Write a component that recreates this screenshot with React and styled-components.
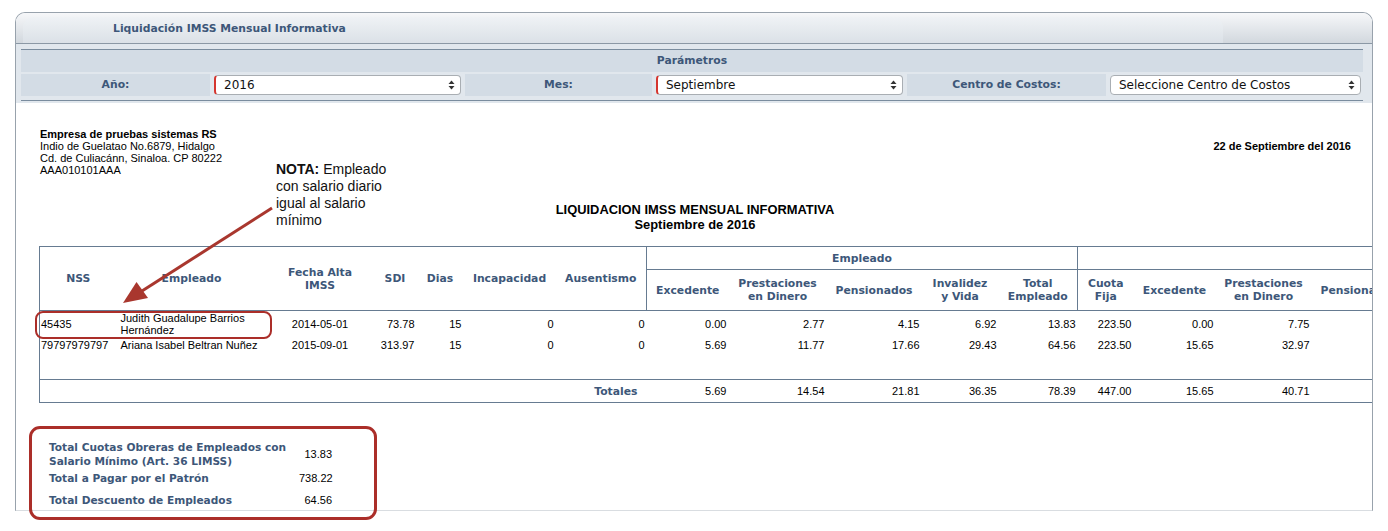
import React from "react";
import styled, { createGlobalStyle } from "styled-components";

const BLUE = "#3d5779";
const LINE = "#667b91";
const RED = "#ab2e29";
const HEAD_FONT = `"DejaVu Sans", Verdana, sans-serif`;
const BODY_FONT = `"Liberation Sans", Arial, Helvetica, sans-serif`;

const GlobalStyle = createGlobalStyle`
  html, body { margin: 0; padding: 0; background: #fff; }
  body { font-family: ${BODY_FONT}; color: #000; }
  *, *::before, *::after { box-sizing: border-box; }
`;

const Page = styled.div`
  position: relative;
  width: 1388px;
  height: 531px;
  padding: 12px 0 0 15px;
  overflow: hidden;
`;

const Panel = styled.section`
  width: 1358px;
  height: 499px;
  border: 1px solid #98a2ac;
  border-bottom-color: #d9dde1;
  border-radius: 10px 10px 0 0;
  overflow: hidden;
  display: flex;
  flex-direction: column;
  background: #fff;
`;

const PanelHeader = styled.header`
  height: 31px;
  flex: none;
  padding: 4px 0 0 7px;
  background: linear-gradient(#f6f7f9, #d2d8de);
  border-bottom: 1px solid #8b98a5;
  display: flex;
  align-items: flex-end;
`;

const Tab = styled.div`
  width: 1200px;
  height: 26px;
  border-radius: 10px 10px 0 0;
  background: linear-gradient(#eff2f5, #dbe1e7);
  padding-left: 90px;
  font: bold 10.8px/24px ${HEAD_FONT};
  color: ${BLUE};
`;

const ParamsArea = styled.div`
  flex: none;
  background: #e1e7ed;
  padding: 5px 9px 2px 5px;
`;

const ParamsBlock = styled.div`
  border-top: 1px solid #7a8c9e;
  border-bottom: 1px solid #7a8c9e;
  padding-bottom: 4px;
  display: flex;
  flex-direction: column;
  gap: 2px;
`;

const ParamsTitle = styled.div`
  height: 22px;
  background: #d3dce5;
  text-align: center;
  font: bold 10.8px/22px ${HEAD_FONT};
  color: ${BLUE};
`;

const FieldsRow = styled.div`
  display: grid;
  grid-template-columns: 189px 251px 187px 251px 199px 1fr;
  column-gap: 2px;
  height: 22px;
`;

const FieldLabel = styled.div`
  background: #d3dce5;
  text-align: center;
  font: bold 10.8px/22px ${HEAD_FONT};
  color: ${BLUE};
`;

const SelectBox = styled.div`
  margin: 1px 2px 0;
  height: 20px;
  background: #fff;
  border: 1px solid #a9aeb3;
  border-left: ${(p) => (p.$required ? `2px solid #d5362f` : `1px solid #a9aeb3`)};
  border-radius: 4px;
  display: flex;
  align-items: center;
  justify-content: space-between;
  padding: 0 5px 0 8px;
  font: 12px ${HEAD_FONT};
  color: #111;
`;

const Content = styled.div`
  flex: 1;
  padding: 25px 21px 0 23px;
`;

const InfoRow = styled.div`
  display: flex;
  justify-content: space-between;
  align-items: flex-start;
`;

const Company = styled.div`
  margin-left: 1px;
  font: 11px/12px ${BODY_FONT};
`;

const Strong = styled.strong`
  font-weight: bold;
`;

const DateText = styled.div`
  margin-top: 12px;
  font: bold 11px/12px ${BODY_FONT};
`;

const ReportTitle = styled.div`
  margin-top: 26px;
  text-align: center;
  font: bold 12.9px/15px ${BODY_FONT};
`;

const Grid = styled.table`
  margin-top: 14px;
  border-collapse: collapse;
  table-layout: fixed;
  width: ${(p) => p.$w}px;
  border: 1px solid ${LINE};
  font: 11px/12px ${BODY_FONT};
`;

const Col = styled.col`
  width: ${(p) => p.$w}px;
`;

const HeadRow = styled.tr`
  height: ${(p) => p.$h}px;
`;

const Th = styled.th`
  font: bold 10.8px/13px ${HEAD_FONT};
  color: ${BLUE};
  text-align: center;
  vertical-align: middle;
  padding: 0 1px;
  border-left: ${(p) => (p.$sep ? `1px solid ${LINE}` : "none")};
  border-bottom: 1px solid ${LINE};
  white-space: nowrap;
  overflow: hidden;
`;

const BodyRow = styled.tr`
  height: ${(p) => p.$h}px;
`;

const Td = styled.td`
  padding: 0 ${(p) => p.$pr ?? 2}px 0 ${(p) => p.$pl ?? 2}px;
  text-align: ${(p) => p.$align || "right"};
  vertical-align: middle;
  overflow: hidden;
  border-top: ${(p) => (p.$top ? `1px solid ${LINE}` : "none")};
`;

const TotalLabel = styled.td`
  padding: 0 9px 0 0;
  text-align: right;
  vertical-align: middle;
  border-top: 1px solid ${LINE};
  font: bold 10.8px/13px ${HEAD_FONT};
  color: ${BLUE};
`;

const Summary = styled.table`
  margin: 37px 0 0 10px;
  border-collapse: collapse;
  table-layout: fixed;
  width: 283px;
`;

const SummaryRow = styled.tr`
  height: ${(p) => p.$h}px;
`;

const SummaryLabel = styled.td`
  width: 250px;
  padding: 0;
  vertical-align: middle;
  font: bold 10.6px/14px ${HEAD_FONT};
  color: ${BLUE};
`;

const SummaryValue = styled.td`
  width: 33px;
  padding: 0;
  text-align: right;
  vertical-align: middle;
  font: 11px/14px ${BODY_FONT};
`;

/* annotation layer drawn over the screenshot */
const Callout = styled.div`
  position: absolute;
  left: ${(p) => p.$x}px;
  top: ${(p) => p.$y}px;
  width: ${(p) => p.$w}px;
  height: ${(p) => p.$h}px;
  border: ${(p) => p.$b}px solid ${RED};
  border-radius: ${(p) => p.$r}px;
  pointer-events: none;
`;

const Note = styled.div`
  position: absolute;
  left: 276px;
  top: 161px;
  font: 14px/17px ${BODY_FONT};
  color: #111;
`;

const ArrowSvg = styled.svg`
  position: absolute;
  left: 110px;
  top: 200px;
  overflow: visible;
  pointer-events: none;
`;

const SortIcon = () => (
  <svg width="7" height="10" viewBox="0 0 7 10">
    <polygon points="0.5,4 3.5,0.5 6.5,4" fill="#333" />
    <polygon points="0.5,6 3.5,9.5 6.5,6" fill="#333" />
  </svg>
);

const Select = ({ value, required }) => (
  <SelectBox $required={required}>
    <span>{value}</span>
    <SortIcon />
  </SelectBox>
);

const left = [
  { w: 77, head: ["NSS"] },
  { w: 150, head: ["Empleado"] },
  { w: 107, head: ["Fecha Alta", "IMSS"] },
  { w: 43, head: ["SDI"] },
  { w: 47, head: ["Dias"] },
  { w: 92, head: ["Incapacidad"] },
  { w: 91, head: ["Ausentismo"] },
];

const group1 = [
  { w: 82, head: ["Excedente"] },
  { w: 98, head: ["Prestaciones", "en Dinero"] },
  { w: 95, head: ["Pensionados"] },
  { w: 77, head: ["Invalidez", "y Vida"] },
  { w: 79, head: ["Total", "Empleado"] },
];

const group2 = [
  { w: 56, head: ["Cuota", "Fija"] },
  { w: 82, head: ["Excedente"] },
  { w: 96, head: ["Prestaciones", "en Dinero"] },
  { w: 95, head: ["Pensionados"] },
  { w: 77, head: ["Invalidez", "y Vida"] },
  { w: 90, head: ["Riesgo de", "Trabajo"] },
  { w: 85, head: ["Guarderías"] },
  { w: 70, head: ["Retiro"] },
  { w: 80, head: ["Cesantía", "y Vejez"] },
  { w: 75, head: ["Infonavit"] },
  { w: 80, head: ["Total", "Patrón"] },
];

const rows = [
  {
    h: 27,
    nss: "45435",
    name: "Judith Guadalupe Barrios Hernández",
    fecha: "2014-05-01",
    sdi: "73.78",
    dias: "15",
    inc: "0",
    aus: "0",
    g1: ["0.00", "2.77", "4.15", "6.92", "13.83"],
    g2: ["223.50", "0.00", "7.75", "11.63", "19.38", "5.53", "11.07", "22.13", "34.86", "55.34", "391.19"],
  },
  {
    h: 15,
    nss: "79797979797",
    name: "Ariana Isabel Beltran Nuñez",
    fecha: "2015-09-01",
    sdi: "313.97",
    dias: "15",
    inc: "0",
    aus: "0",
    g1: ["5.69", "11.77", "17.66", "29.43", "64.56"],
    g2: ["223.50", "15.65", "32.97", "49.45", "82.42", "23.55", "47.10", "94.19", "148.36", "235.49", "952.68"],
  },
];

const totals = {
  g1: ["5.69", "14.54", "21.81", "36.35", "78.39"],
  g2: ["447.00", "15.65", "40.71", "61.08", "101.80", "29.08", "58.17", "116.32", "183.22", "290.83", "1343.86"],
};

const allCols = [...left, ...group1, ...group2];
const tableWidth = allCols.reduce((s, c) => s + c.w, 0);

const HeadText = ({ lines }) =>
  lines.map((l, i) => (
    <React.Fragment key={i}>
      {i > 0 && <br />}
      {l}
    </React.Fragment>
  ));

export default function App() {
  return (
    <>
      <GlobalStyle />
      <Page>
        <Panel>
          <PanelHeader>
            <Tab>Liquidación IMSS Mensual Informativa</Tab>
          </PanelHeader>
          <ParamsArea>
            <ParamsBlock>
              <ParamsTitle>Parámetros</ParamsTitle>
              <FieldsRow>
                <FieldLabel>Año:</FieldLabel>
                <Select value="2016" required />
                <FieldLabel>Mes:</FieldLabel>
                <Select value="Septiembre" required />
                <FieldLabel>Centro de Costos:</FieldLabel>
                <Select value="Seleccione Centro de Costos" />
              </FieldsRow>
            </ParamsBlock>
          </ParamsArea>
          <Content>
            <InfoRow>
              <Company>
                <Strong>Empresa de pruebas sistemas RS</Strong>
                <br />
                Indio de Guelatao No.6879, Hidalgo
                <br />
                Cd. de Culiacánn, Sinaloa. CP 80222
                <br />
                AAA010101AAA
              </Company>
              <DateText>22 de Septiembre del 2016</DateText>
            </InfoRow>
            <ReportTitle>
              LIQUIDACION IMSS MENSUAL INFORMATIVA
              <br />
              Septiembre de 2016
            </ReportTitle>
            <Grid $w={tableWidth}>
              <colgroup>
                {allCols.map((c, i) => (
                  <Col key={i} $w={c.w} />
                ))}
              </colgroup>
              <thead>
                <HeadRow $h={23}>
                  {left.map((c, i) => (
                    <Th key={i} rowSpan={2}>
                      <HeadText lines={c.head} />
                    </Th>
                  ))}
                  <Th colSpan={group1.length} $sep>
                    Empleado
                  </Th>
                  <Th colSpan={group2.length} $sep>
                    Patrón
                  </Th>
                </HeadRow>
                <HeadRow $h={41}>
                  {group1.map((c, i) => (
                    <Th key={"a" + i} $sep={i === 0}>
                      <HeadText lines={c.head} />
                    </Th>
                  ))}
                  {group2.map((c, i) => (
                    <Th key={"b" + i} $sep={i === 0}>
                      <HeadText lines={c.head} />
                    </Th>
                  ))}
                </HeadRow>
              </thead>
              <tbody>
                {rows.map((r, ri) => (
                  <BodyRow key={ri} $h={r.h}>
                    <Td $align="left" $pl={1}>
                      {r.nss}
                    </Td>
                    <Td $align="left" $pl={4}>
                      {r.name}
                    </Td>
                    <Td $align="center">{r.fecha}</Td>
                    <Td>{r.sdi}</Td>
                    <Td>{r.dias}</Td>
                    <Td>{r.inc}</Td>
                    <Td>{r.aus}</Td>
                    {[...r.g1, ...r.g2].map((v, i) => (
                      <Td key={i}>{v}</Td>
                    ))}
                  </BodyRow>
                ))}
                <BodyRow $h={27}>
                  <Td colSpan={allCols.length} />
                </BodyRow>
                <BodyRow $h={23}>
                  <TotalLabel colSpan={left.length}>Totales</TotalLabel>
                  {[...totals.g1, ...totals.g2].map((v, i) => (
                    <Td key={i} $top>
                      {v}
                    </Td>
                  ))}
                </BodyRow>
              </tbody>
            </Grid>
            <Summary>
              <tbody>
                <SummaryRow $h={28}>
                  <SummaryLabel>
                    Total Cuotas Obreras de Empleados con Salario Mínimo (Art. 36 LIMSS)
                  </SummaryLabel>
                  <SummaryValue>13.83</SummaryValue>
                </SummaryRow>
                <SummaryRow $h={20}>
                  <SummaryLabel>Total a Pagar por el Patrón</SummaryLabel>
                  <SummaryValue>738.22</SummaryValue>
                </SummaryRow>
                <SummaryRow $h={23}>
                  <SummaryLabel>Total Descuento de Empleados</SummaryLabel>
                  <SummaryValue>64.56</SummaryValue>
                </SummaryRow>
              </tbody>
            </Summary>
          </Content>
        </Panel>

        <Note>
          <Strong>NOTA:</Strong> Empleado
          <br />
          con salario diario
          <br />
          igual al salario
          <br />
          mínimo
        </Note>
        <ArrowSvg width="165" height="110" viewBox="110 200 165 110">
          <line x1="272" y1="208" x2="142" y2="291" stroke="#a9372e" strokeWidth="3" />
          <polygon points="123,303 136.5,282 148,298" fill="#a9372e" />
        </ArrowSvg>
        <Callout $x={35} $y={311} $w={237} $h={28} $b={2.5} $r={8} />
        <Callout $x={29} $y={426} $w={348} $h={94} $b={3} $r={11} />
      </Page>
    </>
  );
}
